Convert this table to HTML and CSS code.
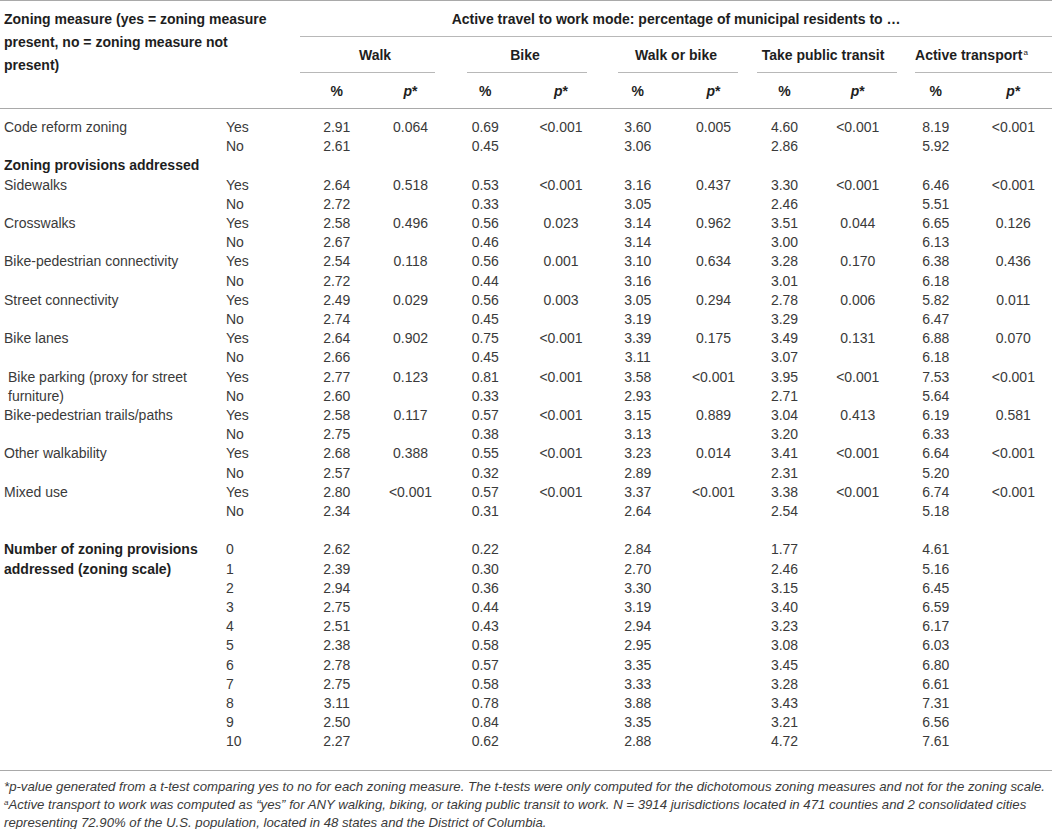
FILE: index.html
```html
<!DOCTYPE html>
<html lang="en">
<head>
<meta charset="utf-8">
<title>Zoning measures and active travel</title>
<link rel="stylesheet" href="styles.css">
</head>
<body>
<table class="tbl">
<colgroup>
<col class="c-label"><col class="c-yn">
<col class="c-w1"><col class="c-w2">
<col class="c-b1"><col class="c-b2">
<col class="c-o1"><col class="c-o2">
<col class="c-t1"><col class="c-t2">
<col class="c-a1"><col class="c-a2">
</colgroup>
<thead>
<tr>
<th class="h-measure" colspan="2" rowspan="3">Zoning measure (yes = zoning measure present, no = zoning measure not present)</th>
<th class="h-top" colspan="10">Active travel to work mode: percentage of municipal residents to …</th>
</tr>
<tr class="h-grp">
<th colspan="2"><div class="grp g-walk">Walk</div></th>
<th colspan="2"><div class="grp g-bike">Bike</div></th>
<th colspan="2"><div class="grp g-wob">Walk or bike</div></th>
<th colspan="2"><div class="grp g-tr">Take public transit</div></th>
<th colspan="2"><div class="grp g-act">Active transport<span class="sup">a</span></div></th>
</tr>
<tr class="h-sub">
<th>%</th><th><i>p</i>*</th>
<th>%</th><th><i>p</i>*</th>
<th>%</th><th><i>p</i>*</th>
<th>%</th><th><i>p</i>*</th>
<th>%</th><th><i>p</i>*</th>
</tr>
</thead>
<tbody>
<tr class="first"><td class="lbl" rowspan="2">Code reform zoning</td><td class="yn">Yes</td><td>2.91</td><td>0.064</td><td>0.69</td><td>&lt;0.001</td><td>3.60</td><td>0.005</td><td>4.60</td><td>&lt;0.001</td><td>8.19</td><td>&lt;0.001</td></tr>
<tr><td class="yn">No</td><td>2.61</td><td></td><td>0.45</td><td></td><td>3.06</td><td></td><td>2.86</td><td></td><td>5.92</td><td></td></tr>
<tr><td class="sec" colspan="12">Zoning provisions addressed</td></tr>
<tr><td class="lbl" rowspan="2">Sidewalks</td><td class="yn">Yes</td><td>2.64</td><td>0.518</td><td>0.53</td><td>&lt;0.001</td><td>3.16</td><td>0.437</td><td>3.30</td><td>&lt;0.001</td><td>6.46</td><td>&lt;0.001</td></tr>
<tr><td class="yn">No</td><td>2.72</td><td></td><td>0.33</td><td></td><td>3.05</td><td></td><td>2.46</td><td></td><td>5.51</td><td></td></tr>
<tr><td class="lbl" rowspan="2">Crosswalks</td><td class="yn">Yes</td><td>2.58</td><td>0.496</td><td>0.56</td><td>0.023</td><td>3.14</td><td>0.962</td><td>3.51</td><td>0.044</td><td>6.65</td><td>0.126</td></tr>
<tr><td class="yn">No</td><td>2.67</td><td></td><td>0.46</td><td></td><td>3.14</td><td></td><td>3.00</td><td></td><td>6.13</td><td></td></tr>
<tr><td class="lbl" rowspan="2">Bike-pedestrian connectivity</td><td class="yn">Yes</td><td>2.54</td><td>0.118</td><td>0.56</td><td>0.001</td><td>3.10</td><td>0.634</td><td>3.28</td><td>0.170</td><td>6.38</td><td>0.436</td></tr>
<tr><td class="yn">No</td><td>2.72</td><td></td><td>0.44</td><td></td><td>3.16</td><td></td><td>3.01</td><td></td><td>6.18</td><td></td></tr>
<tr><td class="lbl" rowspan="2">Street connectivity</td><td class="yn">Yes</td><td>2.49</td><td>0.029</td><td>0.56</td><td>0.003</td><td>3.05</td><td>0.294</td><td>2.78</td><td>0.006</td><td>5.82</td><td>0.011</td></tr>
<tr><td class="yn">No</td><td>2.74</td><td></td><td>0.45</td><td></td><td>3.19</td><td></td><td>3.29</td><td></td><td>6.47</td><td></td></tr>
<tr><td class="lbl" rowspan="2">Bike lanes</td><td class="yn">Yes</td><td>2.64</td><td>0.902</td><td>0.75</td><td>&lt;0.001</td><td>3.39</td><td>0.175</td><td>3.49</td><td>0.131</td><td>6.88</td><td>0.070</td></tr>
<tr><td class="yn">No</td><td>2.66</td><td></td><td>0.45</td><td></td><td>3.11</td><td></td><td>3.07</td><td></td><td>6.18</td><td></td></tr>
<tr><td class="lbl indent" rowspan="2">Bike parking (proxy for street furniture)</td><td class="yn">Yes</td><td>2.77</td><td>0.123</td><td>0.81</td><td>&lt;0.001</td><td>3.58</td><td>&lt;0.001</td><td>3.95</td><td>&lt;0.001</td><td>7.53</td><td>&lt;0.001</td></tr>
<tr><td class="yn">No</td><td>2.60</td><td></td><td>0.33</td><td></td><td>2.93</td><td></td><td>2.71</td><td></td><td>5.64</td><td></td></tr>
<tr><td class="lbl" rowspan="2">Bike-pedestrian trails/paths</td><td class="yn">Yes</td><td>2.58</td><td>0.117</td><td>0.57</td><td>&lt;0.001</td><td>3.15</td><td>0.889</td><td>3.04</td><td>0.413</td><td>6.19</td><td>0.581</td></tr>
<tr><td class="yn">No</td><td>2.75</td><td></td><td>0.38</td><td></td><td>3.13</td><td></td><td>3.20</td><td></td><td>6.33</td><td></td></tr>
<tr><td class="lbl" rowspan="2">Other walkability</td><td class="yn">Yes</td><td>2.68</td><td>0.388</td><td>0.55</td><td>&lt;0.001</td><td>3.23</td><td>0.014</td><td>3.41</td><td>&lt;0.001</td><td>6.64</td><td>&lt;0.001</td></tr>
<tr><td class="yn">No</td><td>2.57</td><td></td><td>0.32</td><td></td><td>2.89</td><td></td><td>2.31</td><td></td><td>5.20</td><td></td></tr>
<tr><td class="lbl" rowspan="2">Mixed use</td><td class="yn">Yes</td><td>2.80</td><td>&lt;0.001</td><td>0.57</td><td>&lt;0.001</td><td>3.37</td><td>&lt;0.001</td><td>3.38</td><td>&lt;0.001</td><td>6.74</td><td>&lt;0.001</td></tr>
<tr><td class="yn">No</td><td>2.34</td><td></td><td>0.31</td><td></td><td>2.64</td><td></td><td>2.54</td><td></td><td>5.18</td><td></td></tr>
<tr class="gap"><td colspan="12"></td></tr>
<tr><td class="sec" rowspan="2">Number of zoning provisions addressed (zoning scale)</td><td class="yn">0</td><td>2.62</td><td></td><td>0.22</td><td></td><td>2.84</td><td></td><td>1.77</td><td></td><td>4.61</td><td></td></tr>
<tr><td class="yn">1</td><td>2.39</td><td></td><td>0.30</td><td></td><td>2.70</td><td></td><td>2.46</td><td></td><td>5.16</td><td></td></tr>
<tr><td></td><td class="yn">2</td><td>2.94</td><td></td><td>0.36</td><td></td><td>3.30</td><td></td><td>3.15</td><td></td><td>6.45</td><td></td></tr>
<tr><td></td><td class="yn">3</td><td>2.75</td><td></td><td>0.44</td><td></td><td>3.19</td><td></td><td>3.40</td><td></td><td>6.59</td><td></td></tr>
<tr><td></td><td class="yn">4</td><td>2.51</td><td></td><td>0.43</td><td></td><td>2.94</td><td></td><td>3.23</td><td></td><td>6.17</td><td></td></tr>
<tr><td></td><td class="yn">5</td><td>2.38</td><td></td><td>0.58</td><td></td><td>2.95</td><td></td><td>3.08</td><td></td><td>6.03</td><td></td></tr>
<tr><td></td><td class="yn">6</td><td>2.78</td><td></td><td>0.57</td><td></td><td>3.35</td><td></td><td>3.45</td><td></td><td>6.80</td><td></td></tr>
<tr><td></td><td class="yn">7</td><td>2.75</td><td></td><td>0.58</td><td></td><td>3.33</td><td></td><td>3.28</td><td></td><td>6.61</td><td></td></tr>
<tr><td></td><td class="yn">8</td><td>3.11</td><td></td><td>0.78</td><td></td><td>3.88</td><td></td><td>3.43</td><td></td><td>7.31</td><td></td></tr>
<tr><td></td><td class="yn">9</td><td>2.50</td><td></td><td>0.84</td><td></td><td>3.35</td><td></td><td>3.21</td><td></td><td>6.56</td><td></td></tr>
<tr class="last"><td></td><td class="yn">10</td><td>2.27</td><td></td><td>0.62</td><td></td><td>2.88</td><td></td><td>4.72</td><td></td><td>7.61</td><td></td></tr>
</tbody>
</table>
<div class="notes">
<p>*p-value generated from a t-test comparing yes to no for each zoning measure. The t-tests were only computed for the dichotomous zoning measures and not for the zoning scale.</p>
<p><span class="fn-mark">a</span>Active transport to work was computed as “yes” for ANY walking, biking, or taking public transit to work. N = 3914 jurisdictions located in 471 counties and 2 consolidated cities representing 72.90% of the U.S. population, located in 48 states and the District of Columbia.</p>
</div>
</body>
</html>
```
FILE: styles.css
```css
html, body {
  margin: 0;
  padding: 0;
  background: #ffffff;
}
body {
  font-family: "Liberation Sans", Arial, sans-serif;
  color: #3a3a3a;
  font-size: 14px;
  width: 1052px;
}
.tbl {
  width: 1052px;
  table-layout: fixed;
  border-collapse: collapse;
  border-top: 1px solid #a9a9a9;
  border-bottom: 1px solid #a9a9a9;
}
.c-label { width: 222px; }
.c-yn { width: 78px; }
.c-w1 { width: 73.5px; }
.c-w2 { width: 74px; }
.c-b1 { width: 75.5px; }
.c-b2 { width: 76px; }
.c-o1 { width: 77.5px; }
.c-o2 { width: 74px; }
.c-t1 { width: 68px; }
.c-t2 { width: 78.5px; }
.c-a1 { width: 77.5px; }
.c-a2 { width: 77.5px; }

th {
  font-weight: bold;
  font-size: 14px;
  color: #1e1e1e;
  line-height: 23px;
  padding: 7px 0 5px;
  text-align: center;
  vertical-align: top;
}
th.h-measure {
  text-align: left;
  padding: 7px 20px 0 4px;
  border-bottom: 1px solid #a9a9a9;
}
th.h-top {
  padding: 7px 0 5px;
  border-bottom: 1px solid #b8b8b8;
}
.h-grp th {
  padding: 0;
}
.grp {
  height: 23px;
  padding: 7px 0 5px;
  border-bottom: 1px solid #b8b8b8;
  white-space: nowrap;
}
.g-walk { margin: 0 12.5px 0 0; padding-left: 15px; }
.g-bike { margin: 0 12px 0 19.5px; padding-right: 4px; }
.g-wob { margin: 0 12.5px 0 19px; padding-right: 4px; }
.g-tr { margin: 0 0 0 6.5px; padding-right: 8px; }
.g-act { margin: 0 0 0 18px; padding-right: 33px; }
.sup {
  font-size: 8px;
  line-height: 1;
  font-weight: normal;
  vertical-align: 5px;
  margin-left: 1px;
}
.h-sub th {
  border-bottom: 1px solid #a9a9a9;
}

td {
  padding: 0;
  line-height: 19.2px;
  height: 19.2px;
  text-align: center;
  vertical-align: top;
  white-space: nowrap;
}
td.lbl, td.sec, td.yn {
  text-align: left;
  white-space: normal;
  padding-left: 4px;
}
td.sec {
  font-weight: bold;
  color: #1e1e1e;
}
td.indent {
  padding-left: 8px;
}
tr.first td {
  padding-top: 9px;
}
tr.last td {
  padding-bottom: 18px;
}

.notes {
  padding: 7px 4px 0;
  font-size: 13.2px;
  line-height: 18px;
  font-style: italic;
  color: #3a3a3a;
}
.notes p {
  margin: 0;
  height: auto;
}
.fn-mark {
  font-size: 8px;
  line-height: 1;
  vertical-align: 4px;
}
```
